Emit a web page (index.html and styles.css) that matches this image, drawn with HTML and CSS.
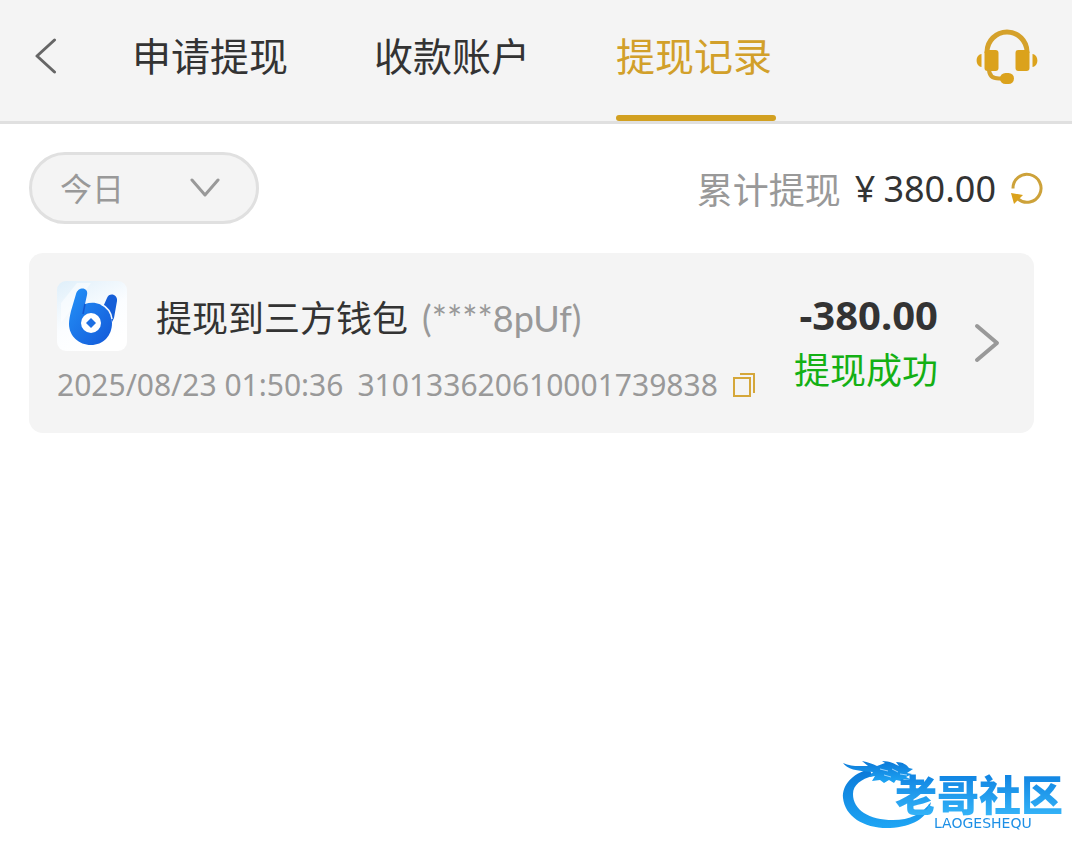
FILE: index.html
```html
<!DOCTYPE html>
<html lang="zh-CN">
<head>
    <meta charset="UTF-8">
    <meta name="viewport" content="width=device-width, initial-scale=1.0">
    <title>提现记录</title>
    <link rel="stylesheet" href="styles.css">
</head>
<body>
    <header class="header">
        <button class="icon-btn back" aria-label="返回">
            <svg width="24" height="36" viewBox="0 0 24 36"><path d="M20.500 2 3 18l17.500 16" fill="none" stroke="#666" stroke-width="3" stroke-linecap="round" stroke-linejoin="round"/></svg>
        </button>
        <nav class="tabs">
            <a href="#apply" class="tab">申请提现</a>
            <a href="#account" class="tab">收款账户</a>
            <a href="#records" class="tab active">提现记录</a>
        </nav>
        <button class="icon-btn service" aria-label="客服">
            <svg width="62" height="56" viewBox="0 0 62 56" fill="#dba21c">
                <path d="M11 24v-1a20 20 0 0 1 40 0v1" fill="none" stroke="#d5a12a" stroke-width="5"/>
                <rect x="8.500" y="21" width="14" height="21" rx="3"/>
                <rect x="39.500" y="21" width="14" height="21" rx="3"/>
                <path d="M5.500 25v13C-1 37-1 26 5.500 25zM56.500 25v13c6.500-1 6.500-12 0-13z"/>
                <path d="M13 40c0 7 4 9.500 10 9.500h4" fill="none" stroke="#d5a12a" stroke-width="4"/>
                <rect x="24" y="44" width="14" height="11" rx="5.500"/>
            </svg>
        </button>
    </header>

    <main class="content">
        <div class="toolbar">
            <div class="filter">
                <select class="filter-select" aria-label="日期">
                    <option>今日</option>
                    <option>昨日</option>
                    <option>近7日</option>
                </select>
                <svg class="filter-arrow" width="30" height="20" viewBox="0 0 30 20"><path d="M2 2l13 15L28 2" fill="none" stroke="#999" stroke-width="3" stroke-linecap="round" stroke-linejoin="round"/></svg>
            </div>
            <div class="total">
                <span class="total-label">累计提现</span>
                <span class="total-value"><span>¥</span><span>380.00</span></span>
                <button class="icon-btn refresh" aria-label="刷新">
                    <svg width="34" height="34" viewBox="0 0 34 34"><path d="M3 17.500A14 14 0 1 1 8 28" fill="none" stroke="#cda23a" stroke-width="3"/><path d="M1 22l12 2-9 9z" fill="#dba21c"/></svg>
                </button>
            </div>
        </div>

        <section class="record">
            <div class="record-main">
                <div class="record-title">
                    <svg class="wallet-logo" width="70" height="70" viewBox="0 0 70 70">
                        <defs>
                            <linearGradient id="walletBg" x1="0" y1="0" x2="0.500" y2="1"><stop offset="0" stop-color="#dfeffa"/><stop offset="0.600" stop-color="#fbfdff"/><stop offset="1" stop-color="#fff"/></linearGradient>
                            <linearGradient id="walletBlue" x1="0" y1="0" x2="1" y2="1"><stop offset="0" stop-color="#2492f8"/><stop offset="1" stop-color="#1358d8"/></linearGradient>
                        </defs>
                        <rect width="70" height="70" rx="9" fill="url(#walletBg)"/>
                        <path d="M4 22 20 2h14L4 42z" fill="#fff" opacity="0.500"/>
                        <path d="M60 20c1-7-8-9-10-3l-4 9c5 4 8 8 9 15l2-4z" fill="#165fd8"/>
                        <path d="M19 13c2-8 13-7 11 1l-2 9c14-5 27 5 27 19 0 13-9 22-21 22S12 55 12 43c0-4 1-9 2-13z" fill="url(#walletBlue)"/>
                        <path d="M44 23c6 3 10 8 11 15" stroke="#f4f9ff" stroke-width="1.500" fill="none"/>
                        <path d="M28 23l-2 10" stroke="#1457cf" stroke-width="1.500" fill="none"/>
                        <circle cx="34" cy="42" r="10" fill="#fff"/>
                        <path d="M34 37l5 5-5 5-5-5z" fill="#1d6fe3"/>
                    </svg>
                    <h2 class="record-name">提现到三方钱包<span>(****8pUf)</span></h2>
                </div>
                <div class="record-meta">
                    <span>2025/08/23 01:50:36</span>
                    <span>310133620610001739838</span>
                    <button class="icon-btn copy" aria-label="复制">
                        <svg width="24" height="26" viewBox="0 0 24 26" fill="none" stroke="#d5a73a" stroke-width="2"><rect x="2" y="6" width="16" height="18"/><path d="M8 2h14v19"/></svg>
                    </button>
                </div>
            </div>
            <div class="record-result">
                <strong class="amount">-380.00</strong>
                <span class="status">提现成功</span>
            </div>
            <a href="#detail" class="detail" aria-label="查看详情">
                <svg width="26" height="40" viewBox="0 0 26 40"><path d="M3 3l20 17L3 37" fill="none" stroke="#999" stroke-width="4" stroke-linecap="round" stroke-linejoin="round"/></svg>
            </a>
        </section>
    </main>

    <div class="brand">
        <svg class="brand-dragon" width="92" height="70" viewBox="0 0 92 70">
            <defs>
                <linearGradient id="brandBlue" x1="0" y1="0" x2="0" y2="1"><stop offset="0" stop-color="#0c79d8"/><stop offset="1" stop-color="#1ea5f4"/></linearGradient>
            </defs>
            <g fill="url(#brandBlue)">
                <path d="M27 9C10 14 0 25 1 38c2 19 22 31 47 30 22-1 38-10 41-26-9 12-21 18-38 18-24 0-40-10-40-26 0-9 8-15 20-18z"/>
                <path d="M1 3c8 4 16 3 25 3L20 1c6 1 11 3 15 5l8-3-3-2c8 0 13 3 17 5l-3-4c7 0 11 3 13 6l4 1-6 4 5 1-6 3 6 3-9-1 3 3-10-2-2 3-5-3-5 3-4-3-8 1 3-5-6 1 4-5C14 11 5 9 1 3z"/>
            </g>
            <path d="M38 9l8 2M50 9l6 3M58 14l7 1M42 15l7 2" stroke="#9bd3fb" stroke-width="1"/>
        </svg>
        <div class="brand-text">
            <span class="brand-name">老哥社区</span>
            <span class="brand-latin">LAOGESHEQU</span>
        </div>
    </div>
</body>
</html>
```

FILE: styles.css
```css
* {
    box-sizing: border-box;
}
body {
    margin: 0;
    padding-right: 8px;
    min-height: 100vh;
    background-color: #fff;
    color: #333;
    font-family: "Noto Sans", "Noto Sans CJK SC", sans-serif;
}
svg {
    display: block;
}
.icon-btn {
    padding: 0;
    border: none;
    background: none;
    cursor: pointer;
}
.header {
    display: flex;
    align-items: flex-start;
    height: 124px;
    padding: 0 34px;
    background-color: #f4f4f4;
    border-bottom: 3px solid #e0e0e0;
}
.back {
    margin-top: 38px;
}
.tabs {
    display: flex;
    gap: 82px;
    margin-left: 74px;
}
.tab {
    min-width: 160px;
    height: 121px;
    line-height: 112px;
    font-size: 39px;
    color: #333;
    text-decoration: none;
}
.tab.active {
    position: relative;
    color: #d2a02a;
}
.tab.active::after {
    content: "";
    position: absolute;
    left: 0;
    right: 0;
    bottom: 0;
    height: 6px;
    border-radius: 3px;
    background-color: #d2a020;
}
.service {
    margin-top: 29px;
    margin-left: auto;
}
.content {
    padding: 28px 28px 0 29px;
}
.toolbar {
    display: flex;
    align-items: center;
    justify-content: space-between;
}
.filter {
    position: relative;
    width: 230px;
}
.filter-select {
    width: 100%;
    height: 72px;
    padding: 0 28px;
    appearance: none;
    border: 3px solid #e0e0e0;
    border-radius: 36px;
    background-color: #f4f4f4;
    color: #999;
    font-family: inherit;
    font-size: 32px;
}
.filter-arrow {
    position: absolute;
    top: 26px;
    right: 39px;
    pointer-events: none;
}
.total {
    display: flex;
    align-items: center;
    gap: 14px;
    font-size: 36px;
}
.total-label {
    color: #999;
}
.total-value {
    display: flex;
    gap: 8px;
}
.record {
    display: flex;
    align-items: center;
    height: 180px;
    margin: 29px 10px 0 0;
    padding: 0 34px 0 28px;
    border-radius: 14px;
    background-color: #f4f4f4;
}
.record-main {
    flex: 1;
}
.record-title {
    display: flex;
    align-items: center;
    gap: 29px;
}
.record-name {
    margin: 0;
    font-size: 36px;
    font-weight: normal;
}
.record-name span,
.record-meta {
    color: #999;
}
.record-name span {
    margin-left: 14px;
    font-family: Lato, sans-serif;
}
.record-meta {
    display: flex;
    align-items: center;
    gap: 14px;
    margin-top: 14px;
    font-size: 30px;
    line-height: 40px;
}
.record-result {
    display: flex;
    flex-direction: column;
    align-items: flex-end;
}
.amount {
    font-size: 40px;
    line-height: 56px;
}
.status {
    font-size: 36px;
    line-height: 56px;
    color: #14b014;
}
.detail {
    margin-left: 36px;
}
.brand {
    position: fixed;
    right: 17px;
    bottom: 25px;
    display: flex;
}
.brand-text {
    display: flex;
    flex-direction: column;
    margin-left: -39px;
    padding-top: 10px;
    color: #1c8fe6;
}
.brand-name {
    font-family: "Noto Sans CJK SC", sans-serif;
    font-size: 42px;
    font-weight: 900;
    line-height: 46px;
    background: linear-gradient(#0c7fe0, #35b4f8);
    background-clip: text;
    color: transparent;
}
.brand-latin {
    padding-left: 39px;
    font-family: "DejaVu Sans", sans-serif;
    font-size: 14px;
    line-height: 14px;
}
```
